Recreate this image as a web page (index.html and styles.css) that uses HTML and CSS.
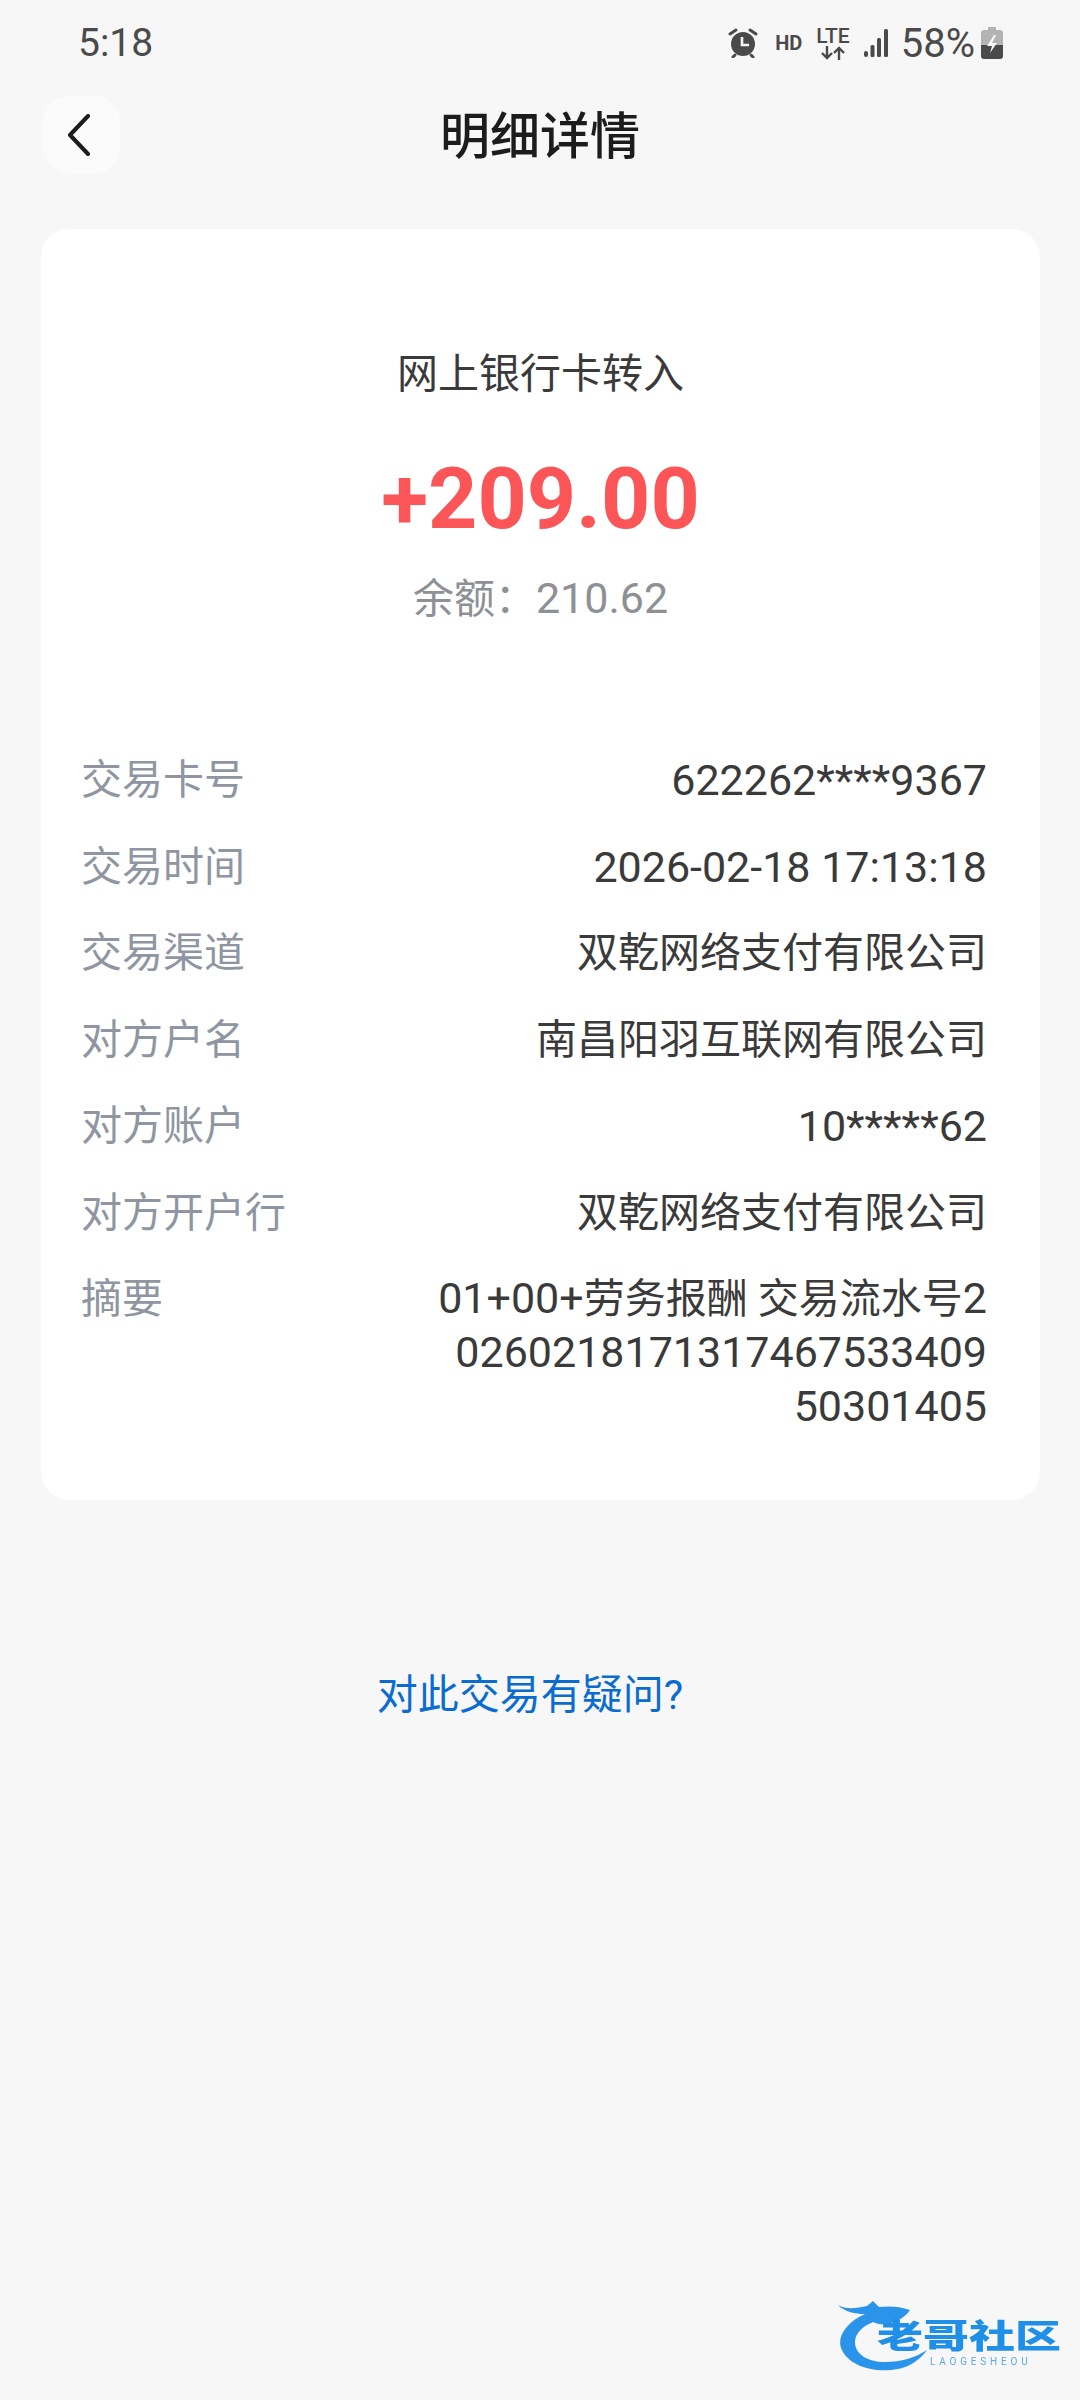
FILE: index.html
```html
<!DOCTYPE html>
<html lang="zh-CN">
<head>
    <meta charset="UTF-8">
    <meta name="viewport" content="width=device-width, initial-scale=1.0">
    <title>明细详情</title>
    <link rel="stylesheet" href="styles.css">
</head>
<body>
    <div class="status-bar">
        <span class="status-time">5:18</span>
        <div class="status-icons">
            <svg class="icon-alarm" width="30" height="30" viewBox="0 0 30 30">
                <circle cx="15" cy="16" r="12" fill="#4a4a4a"/>
                <path d="M2 6l6-4M28 6l-6-4M7 27l-2 2M23 27l2 2" stroke="#4a4a4a" stroke-width="3" stroke-linecap="round" fill="none"/>
                <path d="M14 9v8h7" stroke="#f7f7f7" stroke-width="2.6" fill="none"/>
            </svg>
            <span class="status-hd">HD</span>
            <div class="status-lte">
                <span class="lte-text">LTE</span>
                <svg width="26" height="14" viewBox="0 0 26 14">
                    <path d="M7 0v12M2 7l5 5 5-5M19 14V2M14 7l5-5 5 5" stroke="#4a4a4a" stroke-width="2.4" fill="none"/>
                </svg>
            </div>
            <svg class="icon-signal" width="28" height="30" viewBox="0 0 28 30">
                <rect x="0" y="23" width="4" height="6" rx="2" fill="#4a4a4a"/>
                <rect x="6.5" y="17" width="4" height="12" rx="1.5" fill="#4a4a4a"/>
                <rect x="13" y="10" width="4" height="19" rx="1.5" fill="#4a4a4a"/>
                <rect x="20" y="1" width="4" height="28" rx="1.5" fill="#4a4a4a"/>
            </svg>
            <span class="status-battery-text">58%</span>
            <svg class="icon-battery" width="22" height="32" viewBox="0 0 22 32">
                <path d="M7 0h8v3h4a3 3 0 0 1 3 3v9H0V6a3 3 0 0 1 3-3h4z" fill="#b3b3b3"/>
                <path d="M0 18h22v11a3 3 0 0 1-3 3H3a3 3 0 0 1-3-3z" fill="#4a4a4a"/>
                <path d="M0 15h22v3H0z" fill="#b3b3b3"/>
                <path d="M13 8l-7 11h5l-2 7 7-10h-5l4-8z" fill="#f7f7f7"/>
            </svg>
        </div>
    </div>

    <header class="nav">
        <div class="back-button">
            <svg width="26" height="42" viewBox="0 0 26 42">
                <path d="M22 2L4 21l18 19" stroke="#1c1c1c" stroke-width="4" stroke-linecap="round" stroke-linejoin="round" fill="none"/>
            </svg>
        </div>
        <h1 class="nav-title">明细详情</h1>
    </header>

    <div class="card">
        <div class="summary">
            <div class="summary-type">网上银行卡转入</div>
            <div class="summary-amount">+209.00</div>
            <div class="summary-balance">余额：<span class="num">210.62</span></div>
        </div>
        <div class="rows">
            <div class="row"><span class="row-label">交易卡号</span><span class="row-value num">622262****9367</span></div>
            <div class="row"><span class="row-label">交易时间</span><span class="row-value num">2026-02-18 17:13:18</span></div>
            <div class="row"><span class="row-label">交易渠道</span><span class="row-value">双乾网络支付有限公司</span></div>
            <div class="row"><span class="row-label">对方户名</span><span class="row-value">南昌阳羽互联网有限公司</span></div>
            <div class="row"><span class="row-label">对方账户</span><span class="row-value num">10*****62</span></div>
            <div class="row"><span class="row-label">对方开户行</span><span class="row-value">双乾网络支付有限公司</span></div>
            <div class="row"><span class="row-label">摘要</span><span class="row-value row-value-long"><span class="num">01+00+</span>劳务报酬 交易流水号<span class="num">2<br>0260218171317467533409<br>50301405</span></span></div>
        </div>
    </div>

    <div class="question">对此交易有疑问?</div>

    <div class="watermark">
        <svg class="watermark-dragon" width="120" height="90" viewBox="0 0 120 90">
            <path d="M30 18C12 26 2 40 6 52C12 68 34 76 56 74C70 73 84 66 92 54C80 62 66 66 50 66C32 66 20 58 20 46C20 36 30 28 44 24z" fill="#2a93ea"/>
            <path d="M3 9C12 14 22 12 32 10L38 5L44 11C54 10 64 10 75 14C70 22 56 30 44 28C36 26 32 22 30 18C20 18 10 16 3 9z" fill="#2a93ea"/>
        </svg>
        <div class="watermark-name">老哥社区</div>
        <div class="watermark-sub">LAOGESHEOU</div>
    </div>
</body>
</html>
```

FILE: styles.css
```css
* {
    box-sizing: border-box;
}

html, body {
    height: 100%;
}

body {
    margin: 0;
    background-color: #f7f7f7;
    font-family: Roboto, "Noto Sans CJK SC", sans-serif;
    position: relative;
    overflow: hidden;
}

/* status bar */
.status-bar {
    height: 86px;
    display: flex;
    justify-content: space-between;
    align-items: center;
    padding: 0 77px 0 78px;
    color: #4a4a4a;
}

.status-time {
    font-size: 39px;
}

.status-icons {
    display: flex;
    align-items: center;
}

.icon-alarm {
    margin-right: 17px;
}

.status-hd {
    font-size: 20px;
    font-weight: 700;
    margin-right: 14px;
}

.status-lte {
    display: flex;
    flex-direction: column;
    align-items: center;
    margin-right: 14px;
}

.lte-text {
    font-size: 21px;
    font-weight: 500;
    line-height: 20px;
}

.icon-signal {
    margin-right: 9px;
}

.status-battery-text {
    font-size: 40px;
    margin-right: 6px;
}

/* nav */
.nav {
    height: 143px;
    display: flex;
    align-items: center;
    justify-content: center;
    position: relative;
}

.back-button {
    position: absolute;
    left: 43px;
    top: 10px;
    width: 77px;
    height: 77px;
    border-radius: 26px;
    background-color: #fbfbfb;
    display: flex;
    align-items: center;
    justify-content: center;
    padding-right: 6px;
}

.nav-title {
    margin: 0 0 52px;
    font-size: 50px;
    font-weight: 500;
    color: #1c1c1c;
}

/* card */
.card {
    margin: 0 40px 0 41px;
    height: 1271px;
    background-color: #ffffff;
    border-radius: 28px;
    padding: 0 53px 0 40px;
}

.summary {
    text-align: center;
    padding-top: 115px;
    padding-left: 13px;
}

.summary-type {
    font-size: 41px;
    line-height: 60px;
    color: #3a3a3a;
}

.summary-amount {
    font-size: 86px;
    font-weight: 700;
    line-height: 104px;
    margin-top: 43px;
    color: #fb5558;
}

.summary-balance {
    font-size: 41px;
    line-height: 60px;
    margin-top: 18px;
    color: #8e9094;
}

.rows {
    margin-top: 124px;
}

.row {
    display: flex;
    justify-content: space-between;
    align-items: flex-start;
    margin-bottom: 32.5px;
    font-size: 41px;
    line-height: 54px;
}

.num {
    font-size: 43px;
    line-height: 1;
}

.row-label {
    color: #8f96a1;
    white-space: nowrap;
}

.row-value {
    color: #3a3a3a;
    text-align: right;
    line-height: 54px;
}

/* link */
.question {
    margin-top: 165px;
    padding-right: 20px;
    text-align: center;
    font-size: 41px;
    line-height: 60px;
    color: #0a6ccf;
}

/* watermark sits over the page corner */
.watermark {
    position: absolute;
    left: 835px;
    top: 2296px;
    width: 230px;
    height: 90px;
    filter: blur(0.6px);
}

.watermark-dragon {
    position: absolute;
    left: 0;
    top: 0;
}

.watermark-name {
    position: absolute;
    left: 42px;
    top: 13px;
    font-size: 46px;
    line-height: 54px;
    font-weight: 900;
    white-space: nowrap;
    color: #1f8fe8;
    transform: scaleY(0.72);
}

.watermark-sub {
    position: absolute;
    left: 95px;
    top: 60px;
    font-size: 10px;
    line-height: 12px;
    letter-spacing: 3.8px;
    color: #5aa9e6;
}
```
